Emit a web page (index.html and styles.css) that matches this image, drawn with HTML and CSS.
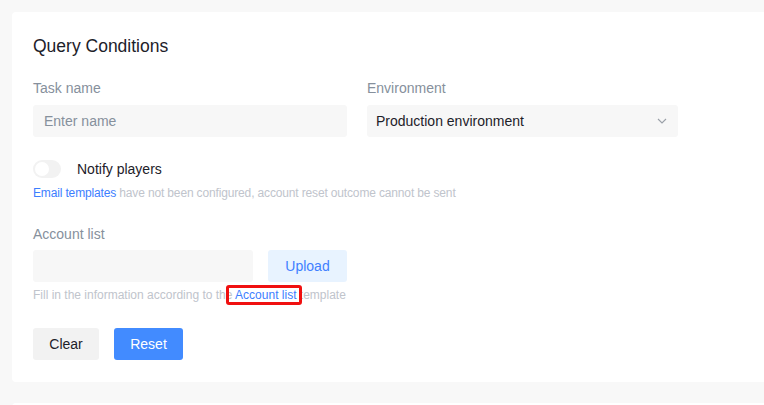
FILE: index.html
```html
<!DOCTYPE html>
<html lang="en">
<head>
<meta charset="utf-8">
<title>Query Conditions</title>
<link rel="stylesheet" href="styles.css">
</head>
<body>
<div class="page">
  <section class="card">
    <h2 class="title">Query Conditions</h2>
    <div class="row">
      <div class="field">
        <div class="label">Task name</div>
        <div class="input placeholder">Enter name</div>
      </div>
      <div class="field field-env">
        <div class="label">Environment</div>
        <div class="input select">
          <span>Production environment</span>
          <svg class="chev" width="10" height="6" viewBox="0 0 10 6"><path d="M1 1l4 4 4-4" fill="none" stroke="#9aa0a8" stroke-width="1.1"/></svg>
        </div>
      </div>
    </div>
    <div class="toggle-row">
      <span class="switch"><span class="knob"></span></span>
      <span class="toggle-text">Notify players</span>
    </div>
    <div class="hint hint-email"><a class="link">Email templates</a> have not been configured, account reset outcome cannot be sent</div>

    <div class="label label-acc">Account list</div>
    <div class="upload-row">
      <div class="input file"></div>
      <button class="btn btn-upload">Upload</button>
    </div>
    <div class="hint">Fill in the information according to the <a class="link marked">Account list</a> template</div>

    <div class="actions">
      <button class="btn btn-clear">Clear</button>
      <button class="btn btn-primary">Reset</button>
    </div>
  </section>
  <section class="card card-next"></section>
</div>
</body>
</html>
```

FILE: styles.css
```css
* { box-sizing: border-box; }
html, body {
  margin: 0;
  padding: 0;
  background: #f8f8f8;
  overflow: hidden;
  font-family: "Liberation Sans", Arial, sans-serif;
}
.page {
  padding: 12px 0 0 12px;
}
.card {
  background: #fff;
  border-radius: 4px 0 0 4px;
  width: 800px;
  padding: 22px 0 22px 21px;
}
.card-next {
  margin-top: 21px;
  height: 60px;
  padding: 0;
}
.title {
  margin: 0;
  font-size: 17.5px;
  line-height: 24px;
  font-weight: 400;
  color: #1d2129;
}
.row {
  display: flex;
  gap: 20px;
  margin-top: 19px;
}
.field { width: 314px; }
.field-env { width: 311px; }
.label {
  font-size: 14px;
  line-height: 22px;
  color: #86909c;
  margin-bottom: 6px;
}
.input {
  height: 32px;
  background: #f7f7f7;
  border-radius: 3px;
  font-size: 14px;
  line-height: 32px;
  padding: 0 11px;
}
.placeholder { color: #86909c; }
.select {
  display: flex;
  justify-content: space-between;
  align-items: center;
  color: #1d2129;
  padding: 0 11px 0 9px;
}
.toggle-row {
  display: flex;
  align-items: center;
  margin-top: 21px;
  height: 22px;
}
.switch {
  width: 28px;
  height: 18px;
  border-radius: 9px;
  background: #f2f2f2;
  position: relative;
  display: inline-block;
}
.knob {
  position: absolute;
  left: 2px;
  top: 2px;
  width: 14px;
  height: 14px;
  border-radius: 50%;
  background: #fff;
}
.toggle-text {
  margin-left: 16px;
  font-size: 14px;
  color: #1d2129;
}
.hint {
  font-size: 12px;
  line-height: 20px;
  color: #c0c4cc;
  margin-top: 3px;
}
.hint-email { letter-spacing: -0.15px; }
.link { color: #3c7eff; }
.marked { position: relative; }
.marked::after {
  content: "";
  position: absolute;
  left: -9px;
  right: -6px;
  top: -3px;
  bottom: -3px;
  border: 3px solid #f01010;
  border-radius: 3px;
}
.label-acc { margin-top: 20px; margin-bottom: 5px; }
.upload-row {
  display: flex;
  gap: 15px;
}
.file { width: 220px; }
.btn {
  height: 32px;
  border: none;
  border-radius: 3px;
  font-family: inherit;
  font-size: 14px;
  padding: 0;
}
.btn-upload {
  width: 79px;
  background: #e8f3ff;
  color: #4080ff;
}
.actions {
  display: flex;
  gap: 15px;
  margin-top: 23px;
}
.btn-clear {
  width: 66px;
  background: #f2f2f2;
  color: #1d2129;
}
.btn-primary {
  width: 69px;
  background: #428bff;
  color: #fff;
}
```
